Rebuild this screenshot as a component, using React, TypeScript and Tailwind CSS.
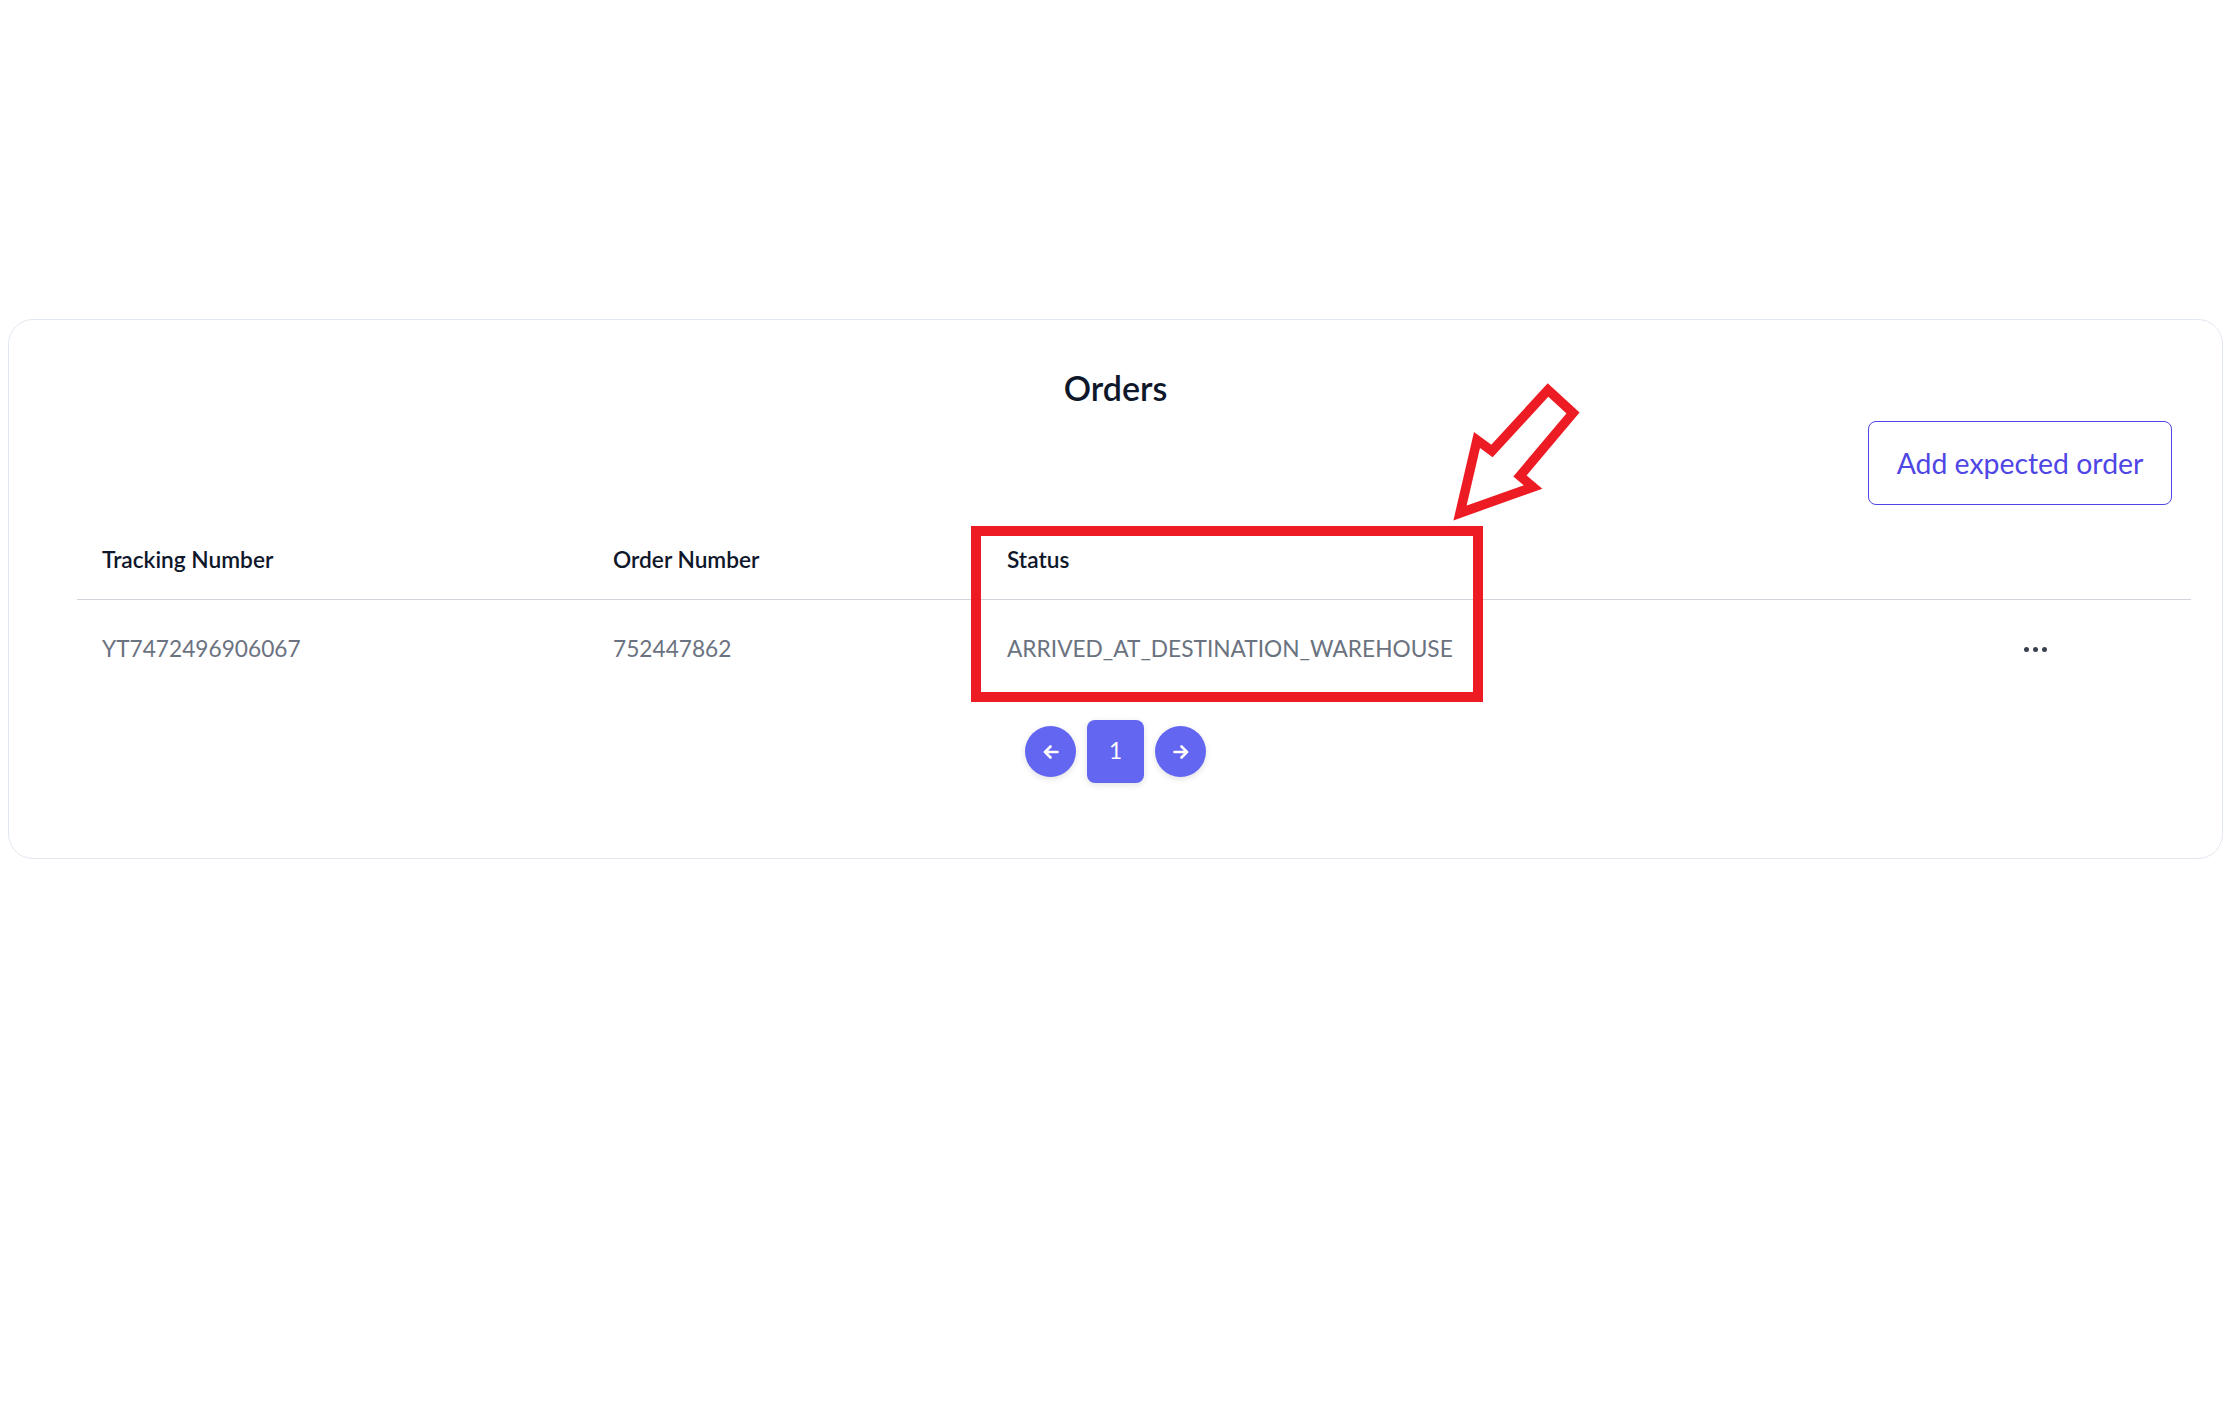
import React from 'react';

const rows = [
  {
    id: 'YT7472496906067',
    tracking: 'YT7472496906067',
    order: '752447862',
    status: 'ARRIVED_AT_DESTINATION_WAREHOUSE',
  },
];

function ArrowIcon({ dir }: { dir: 'left' | 'right' }) {
  return (
    <svg
      width="16"
      height="14"
      viewBox="0 0 16 14"
      fill="none"
      stroke="white"
      strokeWidth="2.6"
      strokeLinecap="round"
      strokeLinejoin="round"
      className={dir === 'right' ? 'rotate-180' : ''}
    >
      <path d="M7.5 1.5 2 7l5.5 5.5M2 7h12.5" />
    </svg>
  );
}

function Pagination() {
  return (
    <div className="flex items-center justify-center gap-[11px]">
      <button className="flex h-[51px] w-[51px] items-center justify-center rounded-full bg-[#6366f1] shadow-[0_2px_6px_rgba(0,0,0,0.12)]">
        <ArrowIcon dir="left" />
      </button>
      <button className="flex h-[63px] w-[57px] items-center justify-center rounded-[8px] bg-[#6366f1] text-[22.7px] text-white shadow-[0_2px_6px_rgba(0,0,0,0.12)]">
        1
      </button>
      <button className="flex h-[51px] w-[51px] items-center justify-center rounded-full bg-[#6366f1] shadow-[0_2px_6px_rgba(0,0,0,0.12)]">
        <ArrowIcon dir="right" />
      </button>
    </div>
  );
}

function OrdersTable() {
  return (
    <div className="ml-[37px]">
      <div className="flex border-b border-[#d1d5db] pt-[39px] pb-[23px] text-[22.7px] leading-[32px] font-semibold text-[#0f172a]">
        <div className="w-[511px] pl-[25px]">Tracking Number</div>
        <div className="w-[394px] pl-[25px]">Order Number</div>
        <div className="flex-1 pl-[25px]">Status</div>
        <div className="w-[312px]" />
      </div>
      {rows.map((row) => (
        <div
          key={row.id}
          className="flex items-center pt-[33px] pb-[32px] text-[22.7px] leading-[32px] text-[#6b7280]"
        >
          <div className="w-[511px] pl-[25px]">{row.tracking}</div>
          <div className="w-[394px] pl-[25px]">{row.order}</div>
          <div className="flex-1 pl-[25px]">{row.status}</div>
          <div className="flex w-[312px] justify-center">
            <div className="flex gap-[4px]">
              <span className="h-[5px] w-[5px] rounded-full bg-[#374151]" />
              <span className="h-[5px] w-[5px] rounded-full bg-[#374151]" />
              <span className="h-[5px] w-[5px] rounded-full bg-[#374151]" />
            </div>
          </div>
        </div>
      ))}
    </div>
  );
}

export default function App() {
  return (
    <div
      className="relative min-h-[1424px] w-full bg-white pl-[8px] pr-[9px] pt-[319px]"
      style={{ fontFamily: 'Lato, "Noto Sans", sans-serif' }}
    >
      <div className="rounded-[25px] border border-[#e2e8f0] bg-white px-[31px] pt-[48px] pb-[75px]">
        <h1 className="text-center text-[34px] leading-[40px] font-semibold text-[#0f172a]">Orders</h1>
        <div className="mt-[13px] flex justify-end pr-[19px]">
          <button className="h-[84px] w-[304px] rounded-[8px] border border-[#4f46e5] text-[28.4px] text-[#4f46e5]">
            Add expected order
          </button>
        </div>
        <OrdersTable />
        <div className="mt-[23px]">
          <Pagination />
        </div>
      </div>

      {/* annotation overlay */}
      <div className="pointer-events-none absolute left-[971px] top-[526px] h-[176px] w-[512px] border-[10px] border-[#ed1c24]" />
      <svg
        className="pointer-events-none absolute left-0 top-0"
        width="2232"
        height="1424"
        fill="none"
      >
        <polygon
          points="1460,513 1477,440 1492,451 1548,390 1573,413 1520,476 1533,487"
          stroke="#ed1c24"
          strokeWidth="9.5"
          strokeLinejoin="miter"
        />
      </svg>
    </div>
  );
}
